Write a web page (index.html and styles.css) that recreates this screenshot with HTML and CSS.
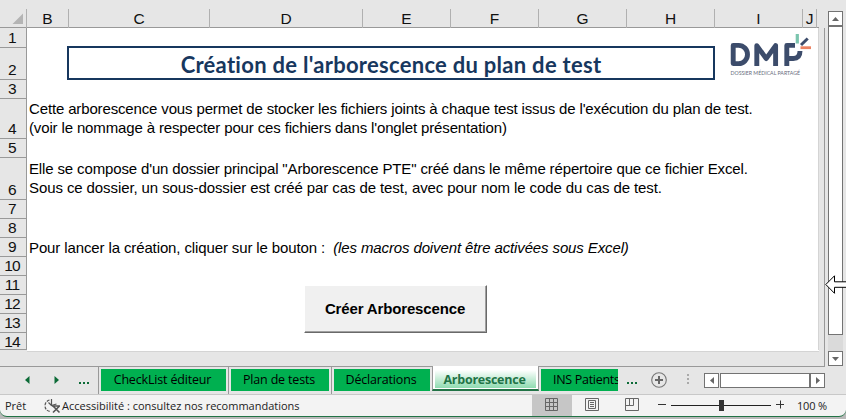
FILE: index.html
```html
<!DOCTYPE html>
<html lang="fr">
<head>
<meta charset="utf-8">
<title>Arborescence</title>
<link rel="stylesheet" href="styles.css">
</head>
<body>
<div class="app">
  <div class="workspace">
    <div class="sheet">
      <div class="columns">
        <div class="corner"><svg width="12" height="12" viewBox="0 0 12 12"><path d="M11 0.500V11H0.500z" fill="#b4b4b4"/></svg></div>
        <div class="col">B</div><div class="col">C</div><div class="col">D</div><div class="col">E</div><div class="col">F</div><div class="col">G</div><div class="col">H</div><div class="col">I</div><div class="col">J</div>
      </div>
      <div class="rows">
        <div class="row r1"><div class="num">1</div><div class="cell"></div></div>
        <div class="row r2"><div class="num">2</div><div class="cell"><h1 class="title"><span>Création de l'arborescence du plan de test</span></h1></div></div>
        <div class="row"><div class="num">3</div><div class="cell"></div></div>
        <div class="row r4"><div class="num">4</div><div class="cell"><p><span class="t1">Cette arborescence vous permet de stocker les fichiers joints à chaque test issus de l'exécution du plan de test.</span><br><span class="t2">(voir le nommage à respecter pour ces fichiers dans l'onglet présentation)</span></p></div></div>
        <div class="row"><div class="num">5</div><div class="cell"></div></div>
        <div class="row r6"><div class="num">6</div><div class="cell"><p><span class="t3">Elle se compose d'un dossier principal "Arborescence PTE" créé dans le même répertoire que ce fichier Excel.</span><br><span class="t4">Sous ce dossier, un sous-dossier est créé par cas de test, avec pour nom le code du cas de test.</span></p></div></div>
        <div class="row"><div class="num">7</div><div class="cell"></div></div>
        <div class="row"><div class="num">8</div><div class="cell"></div></div>
        <div class="row"><div class="num">9</div><div class="cell"><p><span class="t5">Pour lancer la création, cliquer sur le bouton :&nbsp; <i>(les macros doivent être activées sous Excel)</i></span></p></div></div>
        <div class="row"><div class="num">10</div><div class="cell"></div></div>
        <div class="row"><div class="num">11</div><div class="cell"></div></div>
        <div class="row"><div class="num">12</div><div class="cell"></div></div>
        <div class="row"><div class="num">13</div><div class="cell"></div></div>
        <div class="row r14"><div class="num">14</div><div class="cell"></div></div>
        <div class="grid-end"></div>
        <svg class="logo" width="84" height="46" viewBox="0 0 84 46">
          <g fill="none" stroke="#3c4c6b" stroke-width="4.900" stroke-linejoin="round">
            <path d="M4.200 13.400h5.500a8.800 9.100 0 0 1 0 18.200H4.200z"/>
            <path d="M27.800 34V13.600l9.400 13 9.400-13V34"/>
            <path d="M57.800 34V13.400h8.200M57.800 26.500h6.500c4.500 0 6.700-2.500 6.700-7.500"/>
          </g>
          <path d="M72 13 78.700 6.500" stroke="#3c4c6b" stroke-width="3"/>
          <path d="M68.300 2v9.500" stroke="#7bc5ae" stroke-width="3.200"/>
          <path d="M71.500 15.700H82" stroke="#ec8262" stroke-width="2.800"/>
          <text x="1.500" y="42.500" textLength="69.500" lengthAdjust="spacingAndGlyphs">DOSSIER MÉDICAL PARTAGÉ</text>
        </svg>
        <button class="create">Créer Arborescence</button>
      </div>
    </div>
    <div class="vscroll">
      <div class="sbtn up"><svg width="7" height="4" viewBox="0 0 7 4"><path d="M0 4 3.500 0 7 4z" fill="#666"/></svg></div>
      <div class="vthumb"></div>
      <div class="vtrack"></div>
      <div class="sbtn down"><svg width="7" height="4" viewBox="0 0 7 4"><path d="M0 0h7L3.500 4z" fill="#666"/></svg></div>
    </div>
  </div>
  <div class="tabs">
    <svg class="prev" width="5" height="8" viewBox="0 0 5 8"><path d="M4.500 0v8L0 4z" fill="#0c6b37"/></svg>
    <svg class="next" width="5" height="8" viewBox="0 0 5 8"><path d="M.5 0v8L5 4z" fill="#0c6b37"/></svg>
    <span class="more"><i></i><i></i><i></i></span>
    <div class="tab a"><span>CheckList éditeur</span></div>
    <div class="tab b"><span>Plan de tests</span></div>
    <div class="tab c"><span>Déclarations</span></div>
    <div class="tab active"><span>Arborescence</span></div>
    <div class="tab d"><span>INS Patients</span></div>
    <span class="more last"><i></i><i></i><i></i></span>
    <svg class="add" width="16" height="16" viewBox="0 0 16 16"><circle cx="8" cy="8" r="7.300" fill="none" stroke="#777" stroke-width="1.100"/><path d="M8 4v8M4 8h8" stroke="#666" stroke-width="2"/></svg>
    <span class="grip"><i></i><i></i><i></i></span>
    <div class="hscroll">
      <div class="hbtn"><svg width="4" height="7" viewBox="0 0 4 7"><path d="M4 0v7L0 3.500z" fill="#666"/></svg></div>
      <div class="hthumb"></div>
      <div class="hbtn r"><svg width="4" height="7" viewBox="0 0 4 7"><path d="M0 0v7l4-3.500z" fill="#666"/></svg></div>
    </div>
  </div>
  <div class="backdrop">
  <div class="status">
    <span class="ready">Prêt</span>
    <svg class="acc" width="17" height="16" viewBox="0 0 17 16"><g fill="none" stroke="#555"><path d="M5.500 2A6 6 0 0 0 1 7.500c0 3.500 2 5.500 5 6" stroke-dasharray="3 1.200" stroke-width="1.200"/><path d="M7.500 1v6.500M4.500 4.500l3 3 5-1.500" stroke-width="1.200"/><path d="m9 8 6.500 6.500M15.500 8 9 14.500M8 8h8" stroke-width="1.600"/></g></svg>
    <span class="access">Accessibilité : consultez nos recommandations</span>
    <div class="view on"><svg width="13" height="13" viewBox="0 0 13 13"><path d="M.5.5h12v12H.5zM.5 4.500h12M.5 8.500h12M4.500.5v12M8.500.5v12" fill="none" stroke="#666"/></svg></div>
    <div class="view"><svg width="14" height="13" viewBox="0 0 14 13"><path d="M.5.5h13v12H.5zM3.500 2.500h7v8h-7zM5 4.500h4M5 6.500h4M5 8.500h4" fill="none" stroke="#666"/></svg></div>
    <div class="view"><svg width="14" height="13" viewBox="0 0 14 13"><path d="M.5.5h13v12H.5zM.5 7.500h8V.5M4.500.5v7" fill="none" stroke="#666"/></svg></div>
    <svg class="zoomer" width="128" height="13" viewBox="0 0 128 13"><path d="M0 5.500h8M118 5.500h8M122.500 1.500v8" stroke="#333" fill="none"/><path d="M13 6.500h100" stroke="#222"/><path d="M61 1h5v11h-5z" fill="#333"/></svg>
    <span class="pct">100 %</span>
  </div>
  </div>
  <svg class="pointer" width="22" height="20" viewBox="0 0 22 20"><path d="M.8 9.500 9.500.8v6H22v5.500H9.500v6z" fill="#fff" stroke="#000"/></svg>
</div>
</body>
</html>
```

FILE: styles.css
```css
* { box-sizing: border-box; }
body { margin: 0; font-family: "Liberation Sans", Arial, sans-serif; color: #000; }
.app { width: 846px; height: 419px; position: relative; overflow: hidden; background: #e6e6e6; display: flex; flex-direction: column; }
.workspace { height: 366px; display: flex; }
.sheet { width: 828px; }
.columns { height: 28px; padding-top: 9px; display: grid; grid-template-columns: 27px 42px 141px 153px 88px 88px 88px 88px 88px 14px; width: 819px; border-bottom: 1px solid #999; }
.corner { border-right: 1px solid #b0b0b0; padding: 4px 0 0 12px; line-height: 0; }
.col { border-right: 1px solid #b0b0b0; text-align: center; font-size: 15.500px; line-height: 20px; color: #111; }
.rows { position: relative; width: 825px; height: 338px; border-right: 1px solid #999; }
.row { display: flex; height: 19px; width: 819px; }
.num { width: 27px; border-right: 1px solid #999; border-bottom: 1px solid #999; display: flex; align-items: flex-end; justify-content: center; font-size: 15.500px; line-height: 18px; letter-spacing: -0.8px; padding-right: 2px; color: #111; }
.cell { flex: 1; background: #fff; border-right: 1px solid #d4d4d4; padding-left: 2px; }
.r1 { height: 20px; }
.r2 { height: 32px; }
.r4 { height: 40px; }
.r6 { height: 42px; }
.r6 .cell { padding-top: 1px; }
.r14 { height: 17px; }
.r14 .num { align-items: flex-start; }
.title { margin: -2px 0 0 38px; width: 648px; height: 34px; border: 2px solid #17375e; position: relative; color: #17375e; font: bold 22px/34px Lato, sans-serif; letter-spacing: 0.28px; font-variant-ligatures: none; text-align: center; white-space: nowrap; }
.cell p { margin: 0; font-size: 15px; line-height: 19px; white-space: nowrap; }
.t1 { letter-spacing: -0.145px; }
.t2, .t3 { letter-spacing: -0.14px; }
.t4 { letter-spacing: -0.095px; }
.t5 { letter-spacing: -0.12px; }
.grid-end { height: 2px; width: 792px; margin-left: 27px; background: #fff; border-bottom: 1px solid #d4d4d4; }
.logo { position: absolute; left: 729px; top: 4px; }
.logo text { font: 6px Lato, sans-serif; fill: #666c7c; }
.create { position: absolute; left: 304px; top: 257px; width: 183px; height: 48px; border: 0; background: #f0f0f0; border-left: 1px solid #fff; border-top: 1px solid #fff; border-right: 1px solid #696969; border-bottom: 1px solid #696969; box-shadow: inset -1px -1px #a0a0a0; font: bold 15px "Liberation Sans", sans-serif; letter-spacing: -0.15px; padding: 0 1px 2px 0; white-space: nowrap; color: #000; }
.vscroll { width: 15px; padding-top: 11px; display: flex; flex-direction: column; }
.sbtn { height: 15px; border: 1px solid #737373; background: #fff; display: flex; align-items: center; justify-content: center; }
.vthumb { height: 309px; border: 1px solid #737373; background: #fff; }
.vtrack { flex: 1; background: #dadada; }
.tabs { height: 28px; display: flex; width: 825px; border-top: 1px solid #999; }
.prev { margin: 9px 0 0 25px; }
.next { margin: 9px 0 0 24px; }
.more { display: flex; gap: 2px; margin: 15px 9px 0 20px; width: 10px; }
.more i { width: 2px; height: 2px; background: #0c6b37; }
.tab { border-left: 1px solid #999; padding: 2px 2px 3px; height: 27px; font: 12.500px "Open Sans", sans-serif; letter-spacing: -0.17px; white-space: nowrap; }
.tab span { display: block; height: 22px; line-height: 21px; background: #00b050; text-align: center; padding-right: 2px; }
.a { width: 130px; }
.b { width: 103px; }
.c { width: 101px; }
.d { width: 79px; border-left: 0; padding-right: 0; overflow: hidden; }
.d span { padding: 0 0 0 12px; text-align: left; overflow: hidden; letter-spacing: -0.3px; }
.tab.active { width: 107px; height: 25px; margin-top: -1px; padding: 2px 2px 1px; border-right: 1px solid #999; background: #fff; border-bottom: 2px solid #217346; font-weight: bold; color: #217346; letter-spacing: -0.25px; }
.tab.active span { height: 20px; line-height: 23px; background: linear-gradient(#fff 10%, #8fdbb0); }
.more.last { margin: 15px 0 0 9px; }
.add { margin: 5px 0 0 14px; }
.grip { display: flex; flex-direction: column; gap: 2px; margin: 7px 0 0 20px; }
.grip i { width: 2px; height: 2px; background: #aaa; }
.hscroll { margin: 6px 0 0 15px; display: flex; height: 15px; width: 121px; }
.hbtn { width: 15px; border: 1px solid #737373; background: #fff; display: flex; align-items: center; justify-content: center; }
.hthumb { flex: 1; margin-left: 1px; border: 1px solid #737373; background: #fff; }
.backdrop { height: 25px; background: #b9b9b9; }
.status { height: 23px; background: #f3f3f3; border-top: 1px solid #c8c8c8; border-bottom: 1px solid #217346; border-radius: 0 0 7px 7px; display: flex; align-items: center; font: 11px "Open Sans", sans-serif; color: #222; white-space: nowrap; }
.ready { margin-left: 5px; width: 39px; }
.acc { width: 17px; flex: none; }
.access { width: 470px; margin-left: 1px; }
.view { width: 40px; height: 21px; display: flex; align-items: center; justify-content: center; flex: none; padding-bottom: 2px; }
.view.on { background: #c6c6c6; padding-right: 1px; }
.zoomer { margin-left: 6px; flex: none; }
.pct { margin-left: 11px; letter-spacing: -0.2px; }
.pointer { position: absolute; left: 825px; top: 275px; }
```
